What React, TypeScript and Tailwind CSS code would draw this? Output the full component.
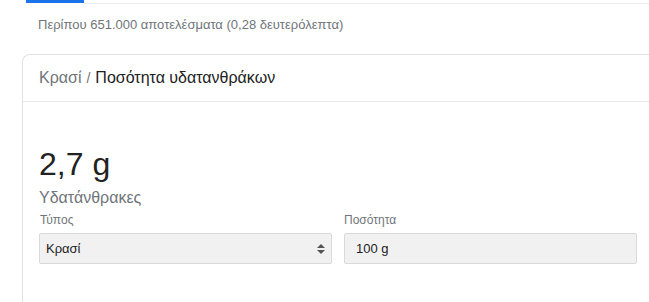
import React from "react";

export default function App() {
  return (
    <div className="w-[649px] h-[302px] overflow-hidden bg-white font-['Liberation_Sans',Arial,sans-serif]">
      {/* ------------------- Tabs strip ------------------- */}
      <div className="flex h-[4px]">
        <div className="w-[26px] border-b border-transparent" />
        <div className="w-[58px] h-[3px] bg-[#1a73e8]" />
        <div className="flex-1 border-b border-[#ebebeb] h-[4px]" />
      </div>

      {/* ------------------- Result stats ------------------- */}
      <div className="pl-[38px] pt-[13px] text-[13px] leading-[16px] text-[#70757a]">
        Περίπου 651.000 αποτελέσματα (0,28 δευτερόλεπτα)
      </div>

      {/* ------------------- Card ------------------- */}
      <section className="ml-[22px] mt-[21px] -mr-[20px] border-l border-t border-[#dfe1e5] rounded-tl-[8px] h-[400px]">
        <div className="h-[47px] flex items-center pl-[16px] border-b border-[#ebebeb] text-[16px]">
          <span className="text-[#70757a]">Κρασί</span>
          <span className="text-[#70757a] text-[14px] mx-[5px]">/</span>
          <span className="text-[#222]">Ποσότητα υδατανθράκων</span>
        </div>

        <div className="pl-[16px] pt-[44px]">
          <div className="text-[32px] leading-[36px] text-[#222]">2,7 g</div>
          <div className="text-[16px] leading-[20px] mt-[6px] text-[#70757a]">Υδατάνθρακες</div>

          <div className="flex gap-[12px] mt-[4px]">
            <div className="w-[293px]">
              <div className="text-[12px] leading-[16px] text-[#70757a] pl-[1px]">Τύπος</div>
              <div className="mt-[5px] h-[31px] flex items-center justify-between bg-[#f1f1f1] border border-[#d9d9d9] rounded-[2px] pl-[6px] pr-[5px]">
                <span className="text-[13px] text-[#222]">Κρασί</span>
                <svg width="10" height="14" viewBox="0 0 10 14" fill="#555">
                  <polygon points="5,2 9,6 1,6" />
                  <polygon points="1,8 9,8 5,12" />
                </svg>
              </div>
            </div>
            <div className="w-[293px]">
              <div className="text-[12px] leading-[16px] text-[#70757a]">Ποσότητα</div>
              <div className="mt-[5px] h-[31px] flex items-center bg-[#f1f1f1] border border-[#d9d9d9] rounded-[2px] pl-[11px]">
                <span className="text-[13px] text-[#222]">100 g</span>
              </div>
            </div>
          </div>
        </div>
      </section>
    </div>
  );
}
